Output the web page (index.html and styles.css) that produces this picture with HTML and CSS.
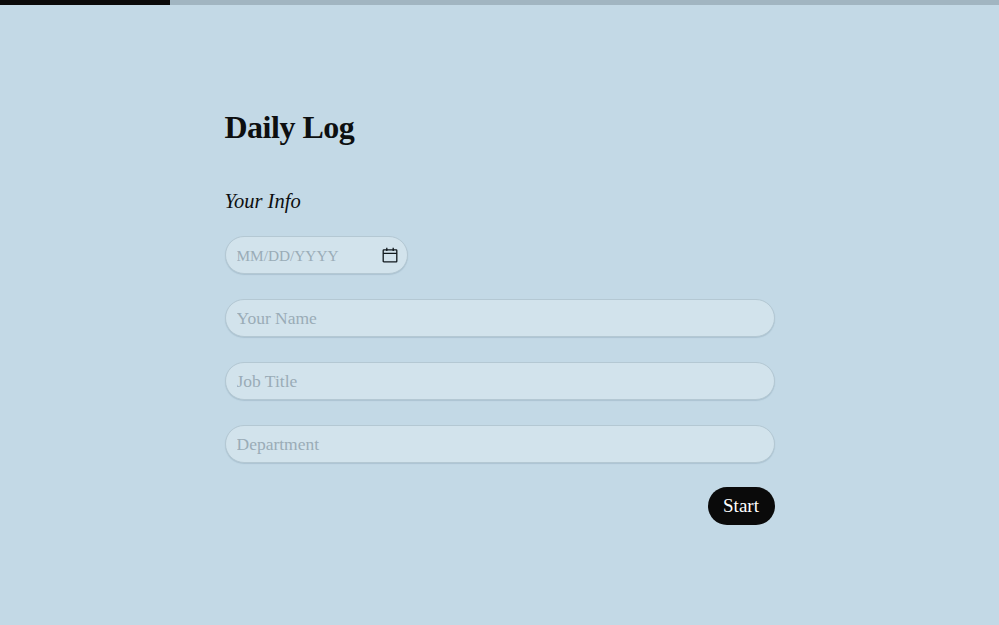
FILE: index.html
```html
<!DOCTYPE html>
<html lang="en">
<head>
<meta charset="utf-8">
<title>Daily Log</title>
<link rel="stylesheet" href="styles.css">
</head>
<body>
<div class="progress"><div class="progress-fill"></div></div>
<main class="form-wrap">
  <h1 class="title">Daily Log</h1>
  <h2 class="section">Your Info</h2>
  <form class="form">
    <div class="date-field">
      <input class="field field-date" type="text" placeholder="MM/DD/YYYY">
      <svg class="cal" viewBox="0 0 16 16" width="16" height="16" fill="none" stroke="#10181c" stroke-width="1.3">
        <rect x="1.2" y="2.8" width="13.6" height="12" rx="0.6"/>
        <path d="M1.2 6.4h13.6M4.8 0.8v3.2M11.2 0.8v3.2"/>
      </svg>
    </div>
    <input class="field" type="text" placeholder="Your Name">
    <input class="field" type="text" placeholder="Job Title">
    <input class="field" type="text" placeholder="Department">
    <div class="actions"><button class="start" type="button">Start</button></div>
  </form>
</main>
</body>
</html>
```
FILE: styles.css
```css
* { box-sizing: border-box; }
html, body { height: 100%; }
body {
  margin: 0;
  background: #c3d9e6;
  font-family: "Liberation Serif", "Times New Roman", serif;
  color: #0d0f10;
  overflow: hidden;
}
.progress { height: 5px; background: #a1b5c1; }
.progress-fill { width: 170px; height: 100%; background: #0a0a0a; }
.form-wrap { width: 550px; margin: 0 auto; padding-top: 102px; }
.title {
  margin: 0;
  font-size: 32px;
  line-height: 40px;
  font-weight: 700;
  letter-spacing: -0.5px;
}
.section {
  margin: 40px 0 0;
  font-size: 20.5px;
  line-height: 28px;
  font-weight: 400;
  font-style: italic;
}
.form { display: flex; flex-direction: column; gap: 24.85px; margin-top: 21px; }
.date-field { position: relative; width: 183px; }
.field {
  display: block;
  width: 100%;
  height: 38px;
  padding: 1px 11px 0;
  border: 1px solid #b4c8d3;
  border-radius: 19px;
  background: #d2e3ec;
  box-shadow: 0 1px 1px rgba(90, 120, 140, 0.22);
  font-family: inherit;
  font-size: 17.5px;
  color: #0d0f10;
  outline: none;
}
.field-date { font-size: 15.3px; }
.field::placeholder { color: #9aacb7; opacity: 1; }
.cal { position: absolute; right: 10px; top: 11px; }
.actions { display: flex; justify-content: flex-end; }
.start {
  width: 67px;
  height: 38px;
  border: 0;
  border-radius: 19px;
  background: #0a0a0a;
  color: #fff;
  font-family: inherit;
  font-size: 19px;
  padding: 0;
}
```
